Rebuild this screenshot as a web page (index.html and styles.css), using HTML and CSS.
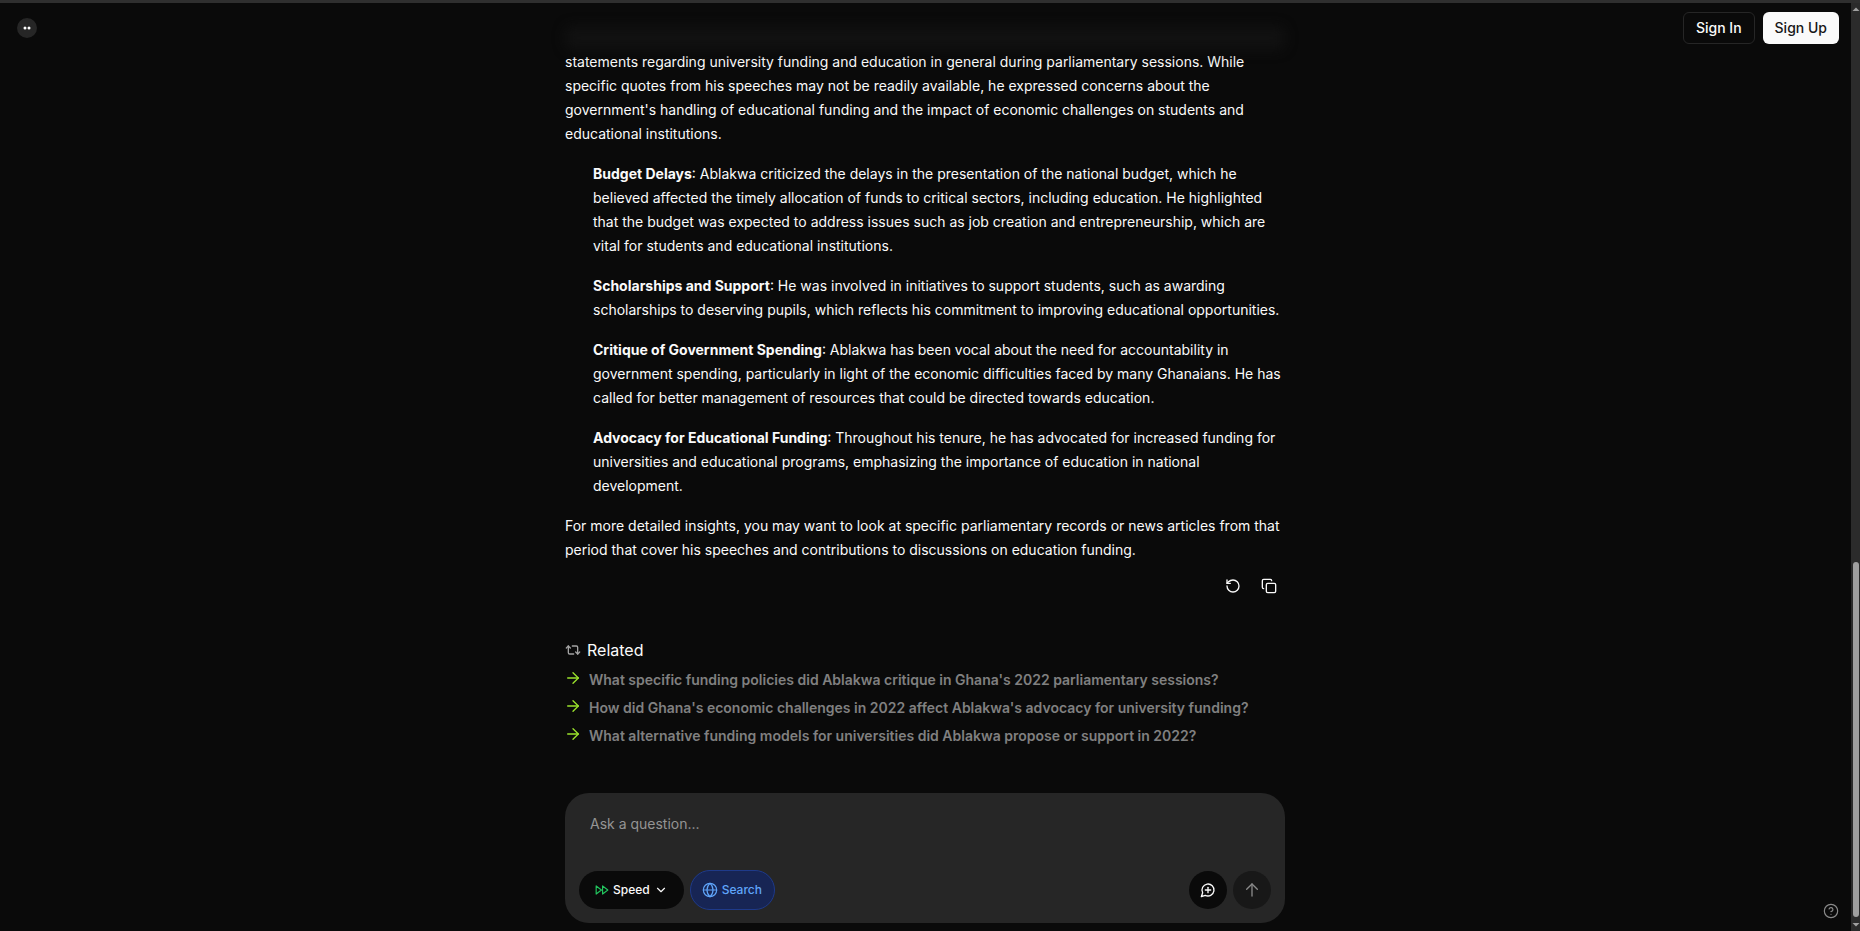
FILE: index.html
```html
<!DOCTYPE html>
<html lang="en">
<head>
<meta charset="utf-8">
<title>Chat</title>
<link rel="stylesheet" href="styles.css">
</head>
<body>
<div class="window-edge"></div>
<div class="app">
  <div class="page">
    <header class="topbar">
      <a class="logo" href="#" aria-label="Home">
        <svg width="20" height="20" viewBox="0 0 20 20"><circle cx="10" cy="10" r="10" fill="#262626"/><circle cx="8" cy="10" r="1.5" fill="#fff"/><circle cx="12" cy="10" r="1.5" fill="#fff"/></svg>
      </a>
      <nav class="auth">
        <button class="btn btn-outline" type="button">Sign In</button>
        <button class="btn btn-solid" type="button">Sign Up</button>
      </nav>
    </header>

    <main class="conversation">
      <article class="column answer">
        <div class="fade-line"></div>
        <p>statements regarding university funding and education in general during parliamentary sessions. While specific quotes from his speeches may not be readily available, he expressed concerns about the government's handling of educational funding and the impact of economic challenges on students and educational institutions.</p>
        <ul class="points">
          <li><strong>Budget Delays</strong>: Ablakwa criticized the delays in the presentation of the national budget, which he believed affected the timely allocation of funds to critical sectors, including education. He highlighted that the budget was expected to address issues such as job creation and entrepreneurship, which are vital for students and educational institutions.</li>
          <li><strong>Scholarships and Support</strong>: He was involved in initiatives to support students, such as awarding scholarships to deserving pupils, which reflects his commitment to improving educational opportunities.</li>
          <li><strong>Critique of Government Spending</strong>: Ablakwa has been vocal about the need for accountability in government spending, particularly in light of the economic difficulties faced by many Ghanaians. He has called for better management of resources that could be directed towards education.</li>
          <li><strong>Advocacy for Educational Funding</strong>: Throughout his tenure, he has advocated for increased funding for universities and educational programs, emphasizing the importance of education in national development.</li>
        </ul>
        <p>For more detailed insights, you may want to look at specific parliamentary records or news articles from that period that cover his speeches and contributions to discussions on education funding.</p>
        <div class="actions">
          <button class="icon-btn" type="button" aria-label="Retry"><svg class="icon" viewBox="0 0 24 24"><path d="M3 12a9 9 0 1 0 9-9 9.750 9.750 0 0 0-6.740 2.740L3 8"/><path d="M3 3v5h5"/></svg></button>
          <button class="icon-btn" type="button" aria-label="Copy"><svg class="icon" viewBox="0 0 24 24"><rect x="8" y="8" width="14" height="14" rx="2"/><path d="M4 16c-1.100 0-2-.9-2-2V4c0-1.100.9-2 2-2h10c1.100 0 2 .9 2 2"/></svg></button>
        </div>
      </article>

      <section class="column related">
        <h2 class="related-title"><svg class="icon muted" viewBox="0 0 24 24"><path d="m2 9 3-3 3 3"/><path d="M13 18H7a2 2 0 0 1-2-2V6"/><path d="m22 15-3 3-3-3"/><path d="M11 6h6a2 2 0 0 1 2 2v10"/></svg>Related</h2>
        <ul class="related-list">
          <li><svg class="icon lime" viewBox="0 0 24 24"><path d="M4 12h16"/><path d="m12 4 8 8-8 8"/></svg><a href="#">What specific funding policies did Ablakwa critique in Ghana's 2022 parliamentary sessions?</a></li>
          <li><svg class="icon lime" viewBox="0 0 24 24"><path d="M4 12h16"/><path d="m12 4 8 8-8 8"/></svg><a href="#">How did Ghana's economic challenges in 2022 affect Ablakwa's advocacy for university funding?</a></li>
          <li><svg class="icon lime" viewBox="0 0 24 24"><path d="M4 12h16"/><path d="m12 4 8 8-8 8"/></svg><a href="#">What alternative funding models for universities did Ablakwa propose or support in 2022?</a></li>
        </ul>
      </section>
    </main>

    <form class="column composer">
      <textarea class="prompt" rows="1" placeholder="Ask a question..." aria-label="Ask a question"></textarea>
      <div class="toolbar">
        <div class="group">
          <button class="pill pill-dark" type="button"><svg class="icon icon-sm green" viewBox="0 0 24 24"><path d="m13 19 9-7-9-7z"/><path d="m2 19 9-7-9-7z"/></svg>Speed<svg class="icon icon-sm chevron" viewBox="0 0 24 24"><path d="m6 9 6 6 6-6"/></svg></button>
          <button class="pill pill-blue" type="button" aria-pressed="true"><svg class="icon thin" viewBox="0 0 24 24"><circle cx="12" cy="12" r="10"/><path d="M12 2c-6 5-6 15 0 20"/><path d="M12 2c6 5 6 15 0 20"/><path d="M2 12h20"/></svg>Search</button>
        </div>
        <div class="group">
          <button class="round round-dark" type="button" aria-label="New chat"><svg class="icon" viewBox="0 0 24 24"><path d="M7.900 20A9 9 0 1 0 4 16.100L2 22Z"/><path d="M8 12h8"/><path d="M12 8v8"/></svg></button>
          <button class="round round-dim" type="button" aria-label="Send"><svg class="icon" viewBox="0 0 24 24"><path d="m4 11 8-8 8 8"/><path d="M12 21V3"/></svg></button>
        </div>
      </div>
    </form>

    <button class="help" type="button" aria-label="Help"><svg class="icon thin" viewBox="0 0 24 24"><circle cx="12" cy="12" r="10"/><path d="M9.090 9a3 3 0 0 1 5.830 1c0 2-3 3-3 3"/><path d="M12 17h.01"/></svg></button>
  </div>
  <div class="scrollbar" aria-hidden="true">
    <svg width="9" height="11" viewBox="0 0 9 11"><path d="M1.500 8 5 4.500 8.500 8z" fill="#a0a0a0"/></svg>
    <div class="thumb-track"><div class="thumb"></div></div>
    <svg width="9" height="11" viewBox="0 0 9 11"><path d="M1.500 3 5 6.500 8.500 3z" fill="#a0a0a0"/></svg>
  </div>
</div>
</body>
</html>
```
FILE: styles.css
```css
* { box-sizing: border-box; }
body {
  margin: 0;
  height: 100vh;
  display: flex;
  flex-direction: column;
  overflow: hidden;
  background: #0a0a0a;
  color: #fafafa;
  font: 14px/24px Inter, "Liberation Sans", sans-serif;
}
button { font: inherit; color: inherit; border: 0; padding: 0; background: none; cursor: pointer; }
ul, p, h2 { margin: 0; padding: 0; }
ul { list-style: none; }
a { color: inherit; text-decoration: none; }

.window-edge { flex: none; height: 3px; background: #2f2f2f; }
.app { flex: 1; min-height: 0; display: flex; }
.page { position: relative; flex: 1; min-width: 0; display: flex; flex-direction: column; padding-right: 1px; }

.topbar {
  position: absolute;
  inset: 0 0 auto 0;
  display: flex;
  align-items: center;
  justify-content: space-between;
  padding: 9px 12px 8px 17px;
}
.logo { display: flex; }
.auth { display: flex; gap: 8px; }
.btn { height: 32px; padding: 0 12px; border-radius: 6px; font-weight: 500; line-height: 20px; }
.btn-outline { border: 1px solid #262626; background: #0a0a0a; }
.btn-solid { background: #fafafa; color: #171717; }

.column { width: 100%; max-width: 720px; margin: 0 auto; }
.conversation { flex: 1; min-height: 0; overflow: hidden; padding: 23px 0 0; }
.fade-line { height: 24px; }
.fade-line::before { content: ""; display: block; height: 24px; border-radius: 8px; background: #111111; filter: blur(6px); }
.points { display: grid; gap: 16px; margin: 16px 0; padding-left: 28px; }
.points strong { font-weight: 700; }
.actions { display: flex; justify-content: flex-end; gap: 4px; padding-top: 8px; }
.icon-btn { width: 32px; height: 32px; display: grid; place-items: center; }

.icon { flex: none; width: 16px; height: 16px; display: block; fill: none; stroke: currentColor; stroke-width: 2; stroke-linecap: round; stroke-linejoin: round; }
.icon-sm { width: 14px; height: 14px; }
.thin { stroke-width: 1.75; }
.muted { color: #a3a3a3; }
.lime { color: #9be22d; }
.green { color: #22c55e; }

.related { padding-top: 36px; }
.related-title { display: flex; align-items: center; gap: 6px; font-size: 16px; font-weight: 400; line-height: 24px; }
.related-list { display: grid; gap: 4px; padding-top: 6px; }
.related-list li { display: flex; gap: 8px; color: #808080; font-weight: 600; }
.related-list .icon { margin-top: 2px; }

.composer { flex: none; margin-bottom: 8px; padding: 19px 14px 13px; border-radius: 24px; background: #262626; }
.prompt { display: block; width: 100%; height: 48px; padding: 0 11px; border: 0; outline: 0; resize: none; background: none; color: #fafafa; font: inherit; }
.prompt::placeholder { color: #949494; }
.toolbar { display: flex; align-items: center; justify-content: space-between; padding-top: 10px; }
.group { display: flex; align-items: center; gap: 6px; }
.pill { display: flex; align-items: center; gap: 4px; height: 38px; border-radius: 20px; font-size: 12px; font-weight: 500; }
.pill-dark { padding: 0 16px; background: #0a0a0a; }
.pill-blue { height: 40px; padding: 0 12px 0 11px; border: 1px solid #1e3a8a; background: #172554; color: #60a5fa; }
.round { width: 38px; height: 38px; border-radius: 50%; display: grid; place-items: center; }
.round-dark { background: #0a0a0a; }
.round-dim { background: #181818; color: #8a8a8a; }

.help { position: absolute; right: 12px; bottom: 12px; color: #8a8a8a; }

.scrollbar { flex: none; width: 9px; display: flex; flex-direction: column; background: #2b2b2b; }
.thumb-track { flex: 1; display: flex; flex-direction: column; justify-content: flex-end; padding: 0 1px 3px 2px; }
.thumb { height: 39.3%; border-radius: 3px; background: #9f9f9f; }
```
